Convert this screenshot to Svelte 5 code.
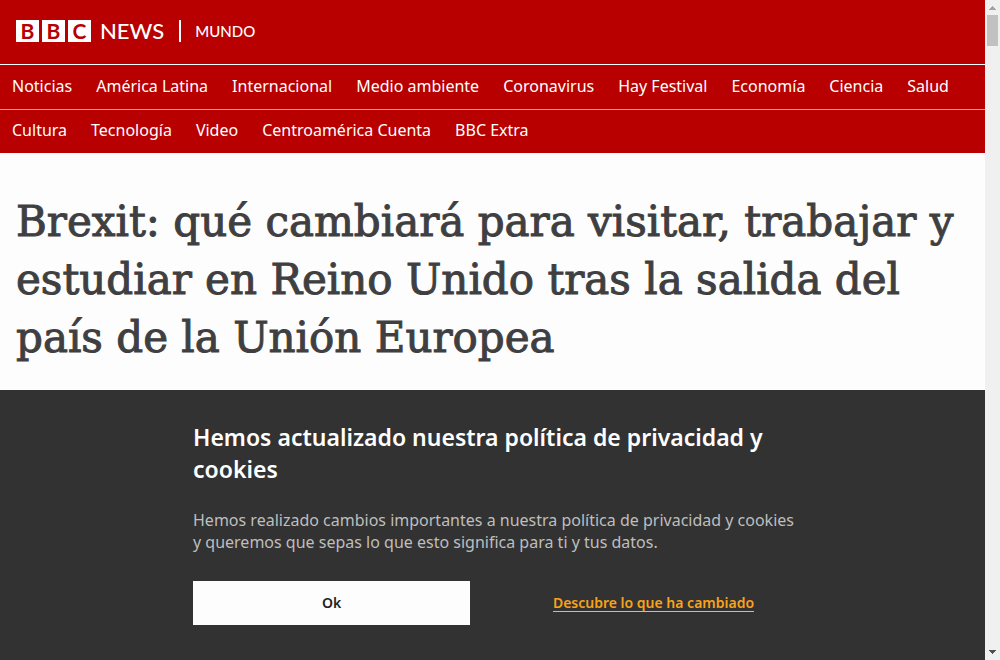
<script>
  const sections = [
    'Noticias', 'América Latina', 'Internacional', 'Medio ambiente', 'Coronavirus',
    'Hay Festival', 'Economía', 'Ciencia', 'Salud', 'Cultura', 'Tecnología',
    'Video', 'Centroamérica Cuenta', 'BBC Extra'
  ];
</script>

<div class="frame">
  <div class="page">
    <header>
      <a class="brand" href="#mundo">
        <span class="blocks"><span>B</span><span>B</span><span>C</span></span>
        <span class="news">NEWS</span>
        <span class="service">MUNDO</span>
      </a>
      <nav>
        <ul>
          {#each sections as section}
            <li><a href="#seccion">{section}</a></li>
          {/each}
        </ul>
      </nav>
    </header>

    <main>
      <h1>Brexit: qué cambiará para visitar, trabajar y estudiar en Reino Unido tras la salida del país de la Unión Europea</h1>
    </main>

    <section class="consent">
      <div class="consent-inner">
        <h2>Hemos actualizado nuestra política de privacidad y cookies</h2>
        <p>Hemos realizado cambios importantes a nuestra política de privacidad y cookies y queremos que sepas lo que esto significa para ti y tus datos.</p>
        <div class="actions">
          <button type="button">Ok</button>
          <div class="more"><a href="#privacidad">Descubre lo que ha cambiado</a></div>
        </div>
      </div>
    </section>
  </div>

  <div class="scrollbar" aria-hidden="true">
    <svg width="15" height="15" viewBox="0 0 15 15" shape-rendering="crispEdges"><path d="M7 6h1v1h1v1h1v1h1v1H4V9h1V8h1V7h1z" fill="#a3a3a3" /></svg>
    <div class="thumb"></div>
    <svg class="down" width="15" height="15" viewBox="0 0 15 15" shape-rendering="crispEdges"><path d="M4 5h7v1h-1v1H9v1H8v1H7V8H6V7H5V6H4z" fill="#505050" /></svg>
  </div>
</div>

<style>
  :global(body) {
    margin: 0;
    background: #fdfdfd;
  }
  .frame {
    display: flex;
    min-height: 100vh;
    font-family: "Noto Sans", sans-serif;
  }
  .page {
    flex: 1;
    min-width: 0;
    display: flex;
    flex-direction: column;
  }
  header {
    background: #b80000;
    color: #fff;
  }
  a {
    color: inherit;
    text-decoration: none;
  }
  .brand {
    display: flex;
    align-items: center;
    height: 22px;
    padding: 20px 16px 22px;
    font-family: Lato, sans-serif;
    line-height: 22px;
  }
  .blocks {
    display: flex;
    gap: 3px;
    margin-right: 9px;
  }
  .blocks span {
    width: 23px;
    background: #fff;
    color: #b80000;
    font-size: 21px;
    font-weight: 700;
    text-align: center;
  }
  .news {
    font-size: 22px;
    font-weight: 500;
    padding-right: 15px;
    border-right: 2px solid #fff;
  }
  .service {
    font-size: 15px;
    font-weight: 500;
    padding-left: 14px;
  }
  nav {
    border-top: 1px solid #fff;
  }
  ul {
    display: flex;
    flex-wrap: wrap;
    margin: 0;
    padding: 0;
    list-style: none;
    overflow: hidden;
  }
  li {
    position: relative;
  }
  li::after {
    content: "";
    position: absolute;
    left: 0;
    bottom: -1px;
    width: 100vw;
    border-bottom: 1px solid #eb9c9c;
  }
  li a {
    display: block;
    padding: 10px 12px 12px;
    font-size: 16px;
    line-height: 22px;
  }
  main {
    flex: 1;
    padding: 40px 16px 22px;
  }
  h1 {
    margin: 0;
    font-family: "DejaVu Serif", serif;
    font-size: 42px;
    font-weight: 400;
    line-height: 58px;
    color: #3f3f42;
    -webkit-text-stroke: 1px #3f3f42;
  }
  .consent {
    background: #323232;
    padding: 31px 16px 35px;
  }
  .consent-inner {
    max-width: 599px;
    margin: 0 auto;
  }
  h2 {
    margin: 0 0 24px;
    color: #fff;
    font-size: 23px;
    font-weight: 600;
    line-height: 32px;
  }
  p {
    margin: 0 -8px 28px 0;
    color: #bebebe;
    font-size: 16px;
    line-height: 22px;
  }
  .actions {
    display: grid;
    grid-template-columns: 1fr 1fr;
    gap: 45px;
    align-items: center;
    font-size: 14px;
    font-weight: 600;
  }
  button {
    height: 44px;
    padding: 0 8px 2px;
    border: 0;
    background: #fdfdfd;
    color: #222;
    font: inherit;
  }
  .more {
    text-align: center;
    line-height: 16px;
  }
  .more a {
    display: inline-block;
    color: #f9a21b;
    border-bottom: 1px solid #bebebe;
  }
  .scrollbar {
    flex: 0 0 15px;
    display: flex;
    flex-direction: column;
    align-items: center;
    background: #f0f0f0;
  }
  .thumb {
    width: 11px;
    height: 31px;
    background: #c1c1c1;
  }
  .down {
    margin-top: auto;
  }
</style>
